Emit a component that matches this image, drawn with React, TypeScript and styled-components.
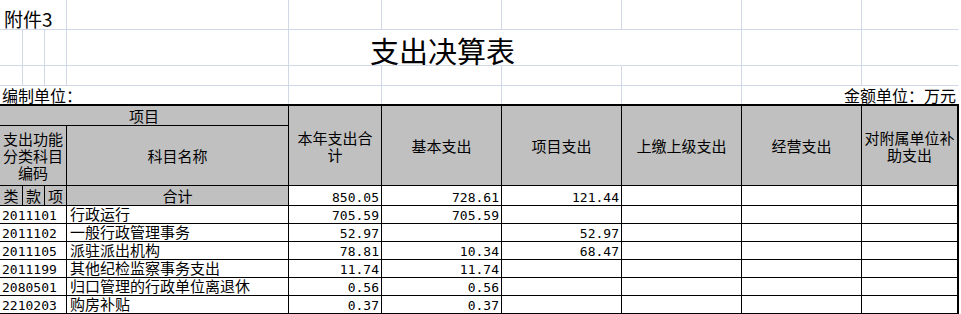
import React from 'react';
import styled, { createGlobalStyle, css } from 'styled-components';

const GRID = '#d0d7e5';
const GRAY = '#c0c0c0';
const CJK = '"Noto Sans CJK SC", "Liberation Sans", sans-serif';
const MONO = '"DejaVu Sans Mono", "Liberation Mono", monospace';

interface Row {
  code: string;
  name: string;
  total: string;
  basic: string;
  project: string;
}

const rows: Row[] = [
  { code: '2011101', name: '行政运行', total: '705.59', basic: '705.59', project: '' },
  { code: '2011102', name: '一般行政管理事务', total: '52.97', basic: '', project: '52.97' },
  { code: '2011105', name: '派驻派出机构', total: '78.81', basic: '10.34', project: '68.47' },
  { code: '2011199', name: '其他纪检监察事务支出', total: '11.74', basic: '11.74', project: '' },
  { code: '2080501', name: '归口管理的行政单位离退休', total: '0.56', basic: '0.56', project: '' },
  { code: '2210203', name: '购房补贴', total: '0.37', basic: '0.37', project: '' },
];

const headers = ['本年支出合计', '基本支出', '项目支出', '上缴上级支出', '经营支出', '对附属单位补助支出'];

const App: React.FC = () => {
  return (
    <>
      <GlobalStyle />
      <Sheet>
        {/* row 1 */}
        <Attachment $cols={3}>附件3</Attachment>
        {Array.from({ length: 7 }).map((_, i) => (
          <SheetCell key={'r1' + i} $noRight={i === 6} />
        ))}

        {/* row 2: title */}
        {Array.from({ length: 4 }).map((_, i) => (
          <SheetCell key={'r2a' + i} />
        ))}
        <Title $cols={3}>支出决算表</Title>
        <SheetCell />
        <SheetCell />
        <SheetCell $noRight />

        {/* row 3 */}
        {Array.from({ length: 10 }).map((_, i) => (
          <SheetCell key={'r3' + i} $noRight={i === 9} />
        ))}

        {/* row 4 */}
        <UnitLabel $cols={4} $noBottom>编制单位：</UnitLabel>
        {Array.from({ length: 4 }).map((_, i) => (
          <SheetCell key={'r4' + i} $noBottom />
        ))}
        <AmountUnit $cols={2} $noBottom $noRight>
          金额单位：万元
        </AmountUnit>

        {/* header */}
        <HeadCell $cols={4} $top>项目</HeadCell>
        {headers.map((h, i) => (
          <HeadCell key={h} $rows={2} $top $last={i === headers.length - 1}>
            {h}
          </HeadCell>
        ))}
        <HeadCell $cols={3}>支出功能分类科目编码</HeadCell>
        <HeadCell>科目名称</HeadCell>

        {/* total row */}
        <HeadCell $tight>类</HeadCell>
        <HeadCell $tight>款</HeadCell>
        <HeadCell $tight>项</HeadCell>
        <HeadCell>合计</HeadCell>
        <NumberCell>850.05</NumberCell>
        <NumberCell>728.61</NumberCell>
        <NumberCell>121.44</NumberCell>
        <NumberCell />
        <NumberCell />
        <NumberCell $last />

        {rows.map((r) => (
          <React.Fragment key={r.code}>
            <CodeCell $cols={3}>{r.code}</CodeCell>
            <NameCell>{r.name}</NameCell>
            <NumberCell>{r.total}</NumberCell>
            <NumberCell>{r.basic}</NumberCell>
            <NumberCell>{r.project}</NumberCell>
            <NumberCell />
            <NumberCell />
            <NumberCell $last />
          </React.Fragment>
        ))}
      </Sheet>
    </>
  );
};
export default App;

const GlobalStyle = createGlobalStyle`
  html, body {
    margin: 0;
    padding: 0;
    background: #fff;
  }
  body {
    font-family: ${CJK};
    color: #000;
  }
`;

const Sheet = styled.div`
  display: grid;
  grid-template-columns: 23px 22px 22px 222px 93px 120px 120px 120px 120px 97px;
  grid-template-rows: 30px 36px 20px 18px 22px 60px 20px repeat(6, 18px);
  width: 959px;
`;

type SpanProps = { $cols?: number; $rows?: number };

const spanCss = css<SpanProps>`
  grid-column: span ${(p) => p.$cols ?? 1};
  grid-row: span ${(p) => p.$rows ?? 1};
`;

const SheetCell = styled.div<SpanProps & { $noRight?: boolean; $noBottom?: boolean }>`
  ${spanCss}
  box-sizing: border-box;
  display: flex;
  align-items: flex-end;
  white-space: nowrap;
  border-right: 1px solid ${(p) => (p.$noRight ? 'transparent' : GRID)};
  border-bottom: 1px solid ${(p) => (p.$noBottom ? 'transparent' : GRID)};
`;

const Attachment = styled(SheetCell)`
  font-size: 19px;
  line-height: 19px;
  padding: 0 0 1px 4px;
`;

const Title = styled(SheetCell)`
  font-size: 29px;
  line-height: 29px;
  padding-left: 81px;
  border-right-color: transparent;
`;

const UnitLabel = styled(SheetCell)`
  font-size: 16px;
  line-height: 16px;
  padding-left: 2px;
`;

const AmountUnit = styled(SheetCell)`
  justify-content: flex-end;
  font-size: 16px;
  line-height: 16px;
  padding-right: 2px;
`;

const TableCell = styled.div<SpanProps & { $last?: boolean; $top?: boolean }>`
  ${spanCss}
  box-sizing: border-box;
  display: flex;
  white-space: nowrap;
  border-right: ${(p) => (p.$last ? 2 : 1)}px solid #000;
  border-bottom: 1px solid #000;
  border-top: ${(p) => (p.$top ? '2px solid #000' : 'none')};
`;

const HeadCell = styled(TableCell)<{ $tight?: boolean }>`
  align-items: center;
  justify-content: center;
  text-align: center;
  white-space: normal;
  padding: 0 ${(p) => (p.$tight ? 0 : 2)}px;
  background: ${GRAY};
  font-size: 15px;
  line-height: 17px;
`;

const CodeCell = styled(TableCell)`
  align-items: flex-end;
  padding: 0 0 2px 2px;
  font-family: ${MONO};
  font-size: 13px;
  line-height: 11px;
`;

const NameCell = styled(TableCell)`
  align-items: flex-end;
  padding: 0 0 2px 3px;
  font-size: 15px;
  line-height: 15px;
`;

const NumberCell = styled(TableCell)`
  align-items: flex-end;
  justify-content: flex-end;
  padding: 0 2px 2px 0;
  font-family: ${MONO};
  font-size: 13px;
  line-height: 11px;
`;
